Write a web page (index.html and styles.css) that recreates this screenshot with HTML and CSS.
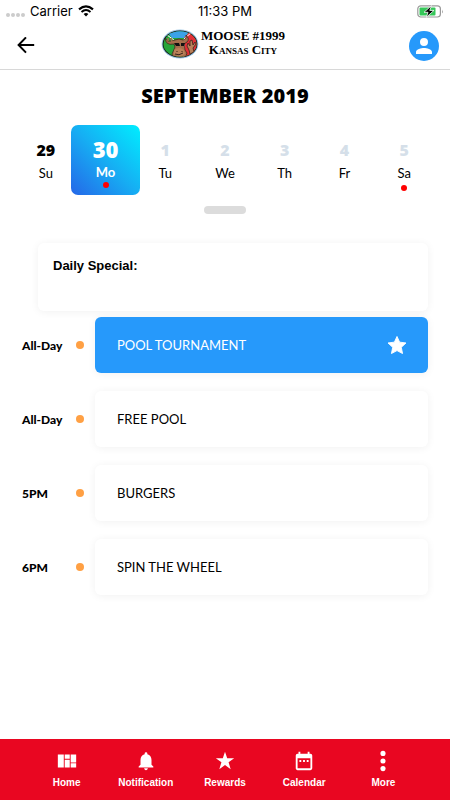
FILE: index.html
```html
<!DOCTYPE html>
<html lang="en">
<head>
    <meta charset="UTF-8">
    <meta name="viewport" content="width=device-width, initial-scale=1">
    <title>Moose #1999 Calendar</title>
    <link rel="stylesheet" href="styles.css">
</head>
<body>
<div class="status">
    <div class="carrier">
        <span class="signal"><i></i><i></i><i></i><i></i></span>
        <span>Carrier</span>
        <svg width="16" height="12" viewBox="0 0 16 12"><path d="M1 4.4Q8-1.8 15 4.4" fill="none" stroke="#000" stroke-width="2.1"/><path d="M3.5 7Q8 3.1 12.5 7" fill="none" stroke="#000" stroke-width="2"/><path d="M5.6 9Q8 7.2 10.4 9L8 11.5z"/></svg>
    </div>
    <div class="clock">11:33 PM</div>
    <svg class="battery" width="27" height="13" viewBox="0 0 27 13">
        <rect x=".8" y=".8" width="22.6" height="11.2" rx="3" fill="#fff" stroke="#999" stroke-width="1.2"/>
        <rect x="2.5" y="2.5" width="16" height="8" rx="1" fill="#35c759"/>
        <path d="M25 4.500q1.500 2 0 4z" fill="#999"/>
        <path d="M14.500.6L7 7.300h4L9.300 12.300l7.700-6.900h-4.200z" stroke="#fff" stroke-width=".8"/>
    </svg>
</div>
<header class="header">
    <button class="back" type="button" aria-label="Back">
        <svg width="18" height="18" viewBox="0 0 18 18"><path d="M17.200 8H2M9 .4L1.600 8 9 15.600" fill="none" stroke="#000" stroke-width="2"/></svg>
    </button>
    <div class="brand">
        <svg width="38" height="30" viewBox="0 0 38 30">
            <defs><clipPath id="oval"><ellipse cx="19" cy="15" rx="16.600" ry="12.800"/></clipPath></defs>
            <ellipse cx="19" cy="15" rx="18.400" ry="14.500" fill="#9cc7e6"/>
            <ellipse cx="19" cy="15" rx="17.400" ry="13.600" fill="#111"/>
            <g clip-path="url(#oval)">
                <path d="M0 0h38v30H0z" fill="#25a53a"/>
                <path d="M4 0h26l-6 9H11z" fill="#3ba2e8"/>
                <path d="M23 9l8-9h7v30H23z" fill="#e32f37"/>
                <path d="M6 6l7 5M31 3l-8 7v20" fill="none" stroke="#fff"/>
                <path d="M4 8q1 5 6 4l4-1q4-2 8 0 4-1 3-5 4 4 1 7l-3 2 1 6 2 3-2 6H13l-2-5 3-7-1-3Q4 17 4 8z" fill="#a46e4c" stroke="#38231a" stroke-width=".7"/>
                <path d="M7 9v3M10 9l1 4" stroke="#a46e4c" stroke-width="1.600"/>
                <path d="M13 14h5l1 3h-4zM20 14h4l-1 3h-3z" fill="#111"/>
                <path d="M13 21q5-4 10 0l1 4q-5 4-11 0z" fill="#b98059"/>
                <path d="M16 22v1M21 22v1M14 25q4 2 8-1" fill="none" stroke="#38231a"/>
                <path d="M28 21l-2-4 1-3 2 3v-5l2-1 1 5 2-3 1 2-3 4 1 4-4 2z" fill="#b98059" stroke="#38231a" stroke-width=".8"/>
            </g>
        </svg>
        <div class="brand-name">
            <span>MOOSE #1999</span>
            <span class="city">Kansas City</span>
        </div>
    </div>
    <button class="profile" type="button" aria-label="Profile">
        <svg width="24" height="24" viewBox="0 0 24 24"><path d="M12 12a4 4 0 1 0 0-8 4 4 0 0 0 0 8zm0 2c-2.700 0-8 1.300-8 4v2h16v-2c0-2.700-5.300-4-8-4z" fill="#fff"/></svg>
    </button>
</header>
<main class="main">
    <h1 class="month">SEPTEMBER 2019</h1>
    <div class="week">
        <button class="day today" type="button"><b>29</b><span>Su</span></button>
        <button class="day on" type="button"><b>30</b><span>Mo</span><i class="mark"></i></button>
        <button class="day" type="button"><b>1</b><span>Tu</span></button>
        <button class="day" type="button"><b>2</b><span>We</span></button>
        <button class="day" type="button"><b>3</b><span>Th</span></button>
        <button class="day" type="button"><b>4</b><span>Fr</span></button>
        <button class="day" type="button"><b>5</b><span>Sa</span><i class="mark"></i></button>
    </div>
    <div class="handle"></div>
    <div class="agenda">
        <section class="special">Daily Special:</section>
        <div class="row">
            <span class="time">All-Day</span>
            <i class="dot"></i>
            <button class="event on" type="button">POOL TOURNAMENT
                <svg width="18" height="18" viewBox="2 2 20 19"><path d="M12 17.700L18.180 21l-1.400-6.900L22 9.240l-7.100-.9L12 2 9.100 8.340 2 9.240l5.220 4.860L5.820 21z" fill="#fff" stroke="#fff" stroke-linejoin="round"/></svg>
            </button>
        </div>
        <div class="row">
            <span class="time">All-Day</span>
            <i class="dot"></i>
            <button class="event" type="button">FREE POOL</button>
        </div>
        <div class="row">
            <span class="time">5PM</span>
            <i class="dot"></i>
            <button class="event" type="button">BURGERS</button>
        </div>
        <div class="row">
            <span class="time">6PM</span>
            <i class="dot"></i>
            <button class="event" type="button">SPIN THE WHEEL</button>
        </div>
    </div>
</main>
<nav class="tabs">
    <a href="#home"><svg width="24" height="24" viewBox="0 0 24 24"><path d="M2 5h6.500v14H2zM9.500 5H15v4.500H9.500zM9.500 10.500H15V19H9.500zM16 5h6v8.500h-6zM16 14.500h6V19h-6z"/></svg>Home</a>
    <a href="#notification"><svg width="24" height="24" viewBox="0 0 24 24"><path d="M12 22c1.100 0 2-.9 2-2h-4c0 1.100.9 2 2 2zm6-6v-5c0-3.070-1.640-5.640-4.500-6.320V4a1.500 1.500 0 0 0-3 0v.68C7.630 5.360 6 7.920 6 11v5l-2 2v1h16v-1z"/></svg>Notification</a>
    <a href="#rewards"><svg width="24" height="24" viewBox="0 0 24 24"><path d="M12 2l2.400 7H22l-6.100 4.400 2.300 7.600-6.200-4.600L5.800 21l2.300-7.600L2 9h7.600z"/></svg>Rewards</a>
    <a href="#calendar"><svg width="24" height="24" viewBox="0 0 24 24"><path fill-rule="evenodd" d="M9 11H7v2h2zm4 0h-2v2h2zm4 0h-2v2h2zm2-7h-1V2h-2v2H8V2H6v2H5a2 2 0 0 0-2 2v14c0 1.100.9 2 2 2h14a2 2 0 0 0 2-2V6a2 2 0 0 0-2-2zm0 16H5V9h14z"/></svg>Calendar</a>
    <a href="#more"><svg width="24" height="24" viewBox="0 0 24 24"><circle cx="12" cy="3.700" r="2.800"/><circle cx="12" cy="12" r="2.800"/><circle cx="12" cy="20.300" r="2.800"/></svg>More</a>
</nav>
</body>
</html>
```
FILE: styles.css
```css
*{margin: 0;padding: 0;box-sizing: border-box;}
body{
    min-height: 100vh;
    display: flex;
    flex-direction: column;
    background: #fff;
    color: #000;
    font-family: Lato, sans-serif;
}
button{
    border: 0;
    background: none;
    color: inherit;
    font: inherit;
    cursor: pointer;
}
svg{display: block;flex: none;}
.status{
    height: 22px;
    padding: 0 6px;
    display: grid;
    grid-template-columns: 1fr auto 1fr;
    align-items: center;
    font: 13px/22px Inter, sans-serif;
}
.carrier{
    display: flex;
    align-items: center;
    gap: 5px;
}
.signal{
    display: flex;
    gap: 1px;
    padding-top: 7px;
}
.signal i{
    width: 4px;
    height: 4px;
    border-radius: 50%;
    background: #ccc;
}
.battery{justify-self: end;}
.header{
    height: 48px;
    padding: 0 11px;
    display: grid;
    grid-template-columns: 1fr auto 1fr;
    align-items: center;
    border-bottom: 1px solid #d8d8d8;
}
.back{
    padding: 0 6px;
    justify-self: start;
}
.brand{
    padding-right: 4px;
    display: flex;
    align-items: center;
    gap: 2px;
}
.brand > svg{margin-bottom: 4px;}
.brand-name{
    padding-bottom: 5px;
    display: flex;
    flex-direction: column;
    align-items: center;
    font: bold 13px/14px "Liberation Serif", serif;
}
.brand-name .city{font-variant: small-caps;}
.profile{
    width: 30px;
    height: 30px;
    display: flex;
    align-items: center;
    justify-content: center;
    justify-self: end;
    border-radius: 50%;
    background: #2699fb;
}
.main{flex: 1;}
.month{
    padding-top: 13px;
    text-align: center;
    font: 800 20px/26px "Open Sans", sans-serif;
}
.week{
    padding: 16px 16px 0;
    display: grid;
    grid-template-columns: repeat(7, 1fr);
}
.day{
    height: 70px;
    padding-top: 14px;
    display: flex;
    flex-direction: column;
    align-items: center;
    font-size: 13px;
    line-height: 20px;
}
.day b{
    padding-bottom: 2px;
    color: #d5dfe9;
    font: 800 16px/22px "Open Sans", sans-serif;
}
.day.today b{color: #000;}
.day.on{
    margin: 0 -5px;
    padding-top: 12px;
    border-radius: 7px;
    background: linear-gradient(to top right, #2567e8, #16aef3 50%, #00eeff);
    color: #fff;
    font-weight: bold;
}
.day.on b{
    padding-bottom: 0;
    color: #fff;
    font-size: 22px;
    line-height: 25px;
}
.mark{
    width: 6px;
    height: 6px;
    margin-top: 2px;
    flex: none;
    border-radius: 50%;
    background: #f00;
}
.day.on .mark{margin-top: 0;}
.handle{
    width: 42px;
    height: 8px;
    margin: 11px auto 29px;
    border-radius: 4px;
    background: #dcdcdc;
}
.agenda{padding: 0 22px 20px;}
.special,.event{
    border-radius: 6px;
    background: #fff;
    box-shadow: 0 1px 8px rgba(0,0,0,0.06);
}
.special{
    min-height: 68px;
    margin: 0 0 6px 16px;
    padding: 14px 15px;
    font: bold 13px/18px "Liberation Sans", sans-serif;
}
.row{
    display: flex;
    align-items: center;
    margin-bottom: 18px;
    font-size: 13px;
}
.time{
    width: 54px;
    font-size: 12px;
    font-weight: 900;
}
.dot{
    width: 8px;
    height: 8px;
    margin-right: 11px;
    border-radius: 50%;
    background: #ffa044;
}
.event{
    flex: 1;
    min-height: 56px;
    padding: 0 22px;
    display: flex;
    align-items: center;
    justify-content: space-between;
}
.event.on{
    background: #2699fb;
    color: #fff;
}
.tabs{
    height: 61px;
    padding: 11px 27px 0;
    display: grid;
    grid-template-columns: repeat(5, 1fr);
    background: #e90621;
}
.tabs a{
    display: flex;
    flex-direction: column;
    align-items: center;
    gap: 5px;
    color: #fff;
    font: bold 10px/12px "Liberation Sans", sans-serif;
    text-decoration: none;
}
.tabs svg{width: 22px;height: 22px;fill: #fff;}
```
